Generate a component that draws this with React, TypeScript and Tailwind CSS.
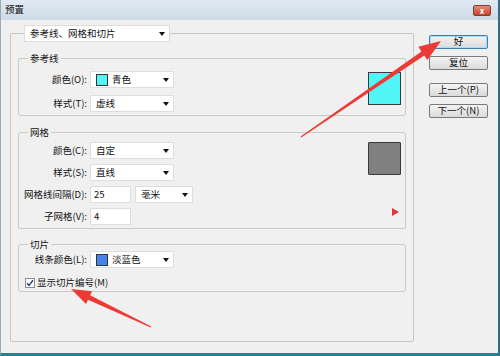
import React from "react"

const font = { fontFamily: '"Noto Sans CJK SC", "Noto Sans", sans-serif' }

function Caret() {
  return (
    <svg width="6" height="4" viewBox="0 0 6 4" className="shrink-0">
      <path d="M0 0h6L3 4z" fill="#111" />
    </svg>
  )
}

function Select({ w, children }: { w: string; children: React.ReactNode }) {
  return (
    <div className={`${w} h-[17px] bg-white border border-[#dedede] flex items-center pl-[5px] pr-[4px] shrink-0`}>
      <div className="flex-1 flex items-center gap-[4px] leading-none">{children}</div>
      <Caret />
    </div>
  )
}

function Swatch({ color }: { color: string }) {
  return <span className={`w-[12px] h-[12px] border border-[#333] ${color}`} />
}

function Row({ label, children }: { label: string; children: React.ReactNode }) {
  return (
    <div className="flex items-center h-[17px]">
      <span className="w-[69px] text-right pr-[1px] whitespace-nowrap">{label}</span>
      <div className="ml-[2px] flex items-center gap-[4px]">{children}</div>
    </div>
  )
}

function Group({ title, className, children }: { title: string; className: string; children: React.ReactNode }) {
  return (
    <fieldset className={`border border-[#cacaca] rounded-[2px] mx-[7px] ${className}`}>
      <legend className="ml-[9px] px-[2px] leading-[12px]">{title}</legend>
      {children}
    </fieldset>
  )
}

function Btn({ children, primary }: { children: React.ReactNode; primary?: boolean }) {
  return (
    <div
      className={`h-[14px] w-[59px] rounded-[2px] border flex items-center justify-center leading-none bg-gradient-to-b from-[#f4f4f4] to-[#dadada] ${
        primary ? "border-[#3c7fb1] shadow-[inset_0_0_0_1px_#a8dcf7]" : "border-[#7a7a7a]"
      }`}
    >
      {children}
    </div>
  )
}

export default function App() {
  return (
    <div
      className="w-[500px] h-[356px] relative overflow-hidden bg-[#f0f0f0] border-l border-l-[#98abbd] border-r-2 border-r-[#2f6d86] border-b-[3px] border-b-[#2e7f8d] text-[9.5px] text-[#111] flex flex-col"
      style={font}
    >
      {/* title bar */}
      <div className="h-[20px] shrink-0 flex items-start justify-between pl-[4px] pr-[7px] bg-gradient-to-b from-[#e1eaf3] to-[#cddae7]">
        <span className="mt-[5px] leading-none">预置</span>
        <div className="mt-[5px] w-[18px] h-[11px] rounded-[2px] border border-[#8a3a2c] bg-gradient-to-b from-[#e58a78] to-[#c2432c] flex items-center justify-center text-white text-[8px] font-bold leading-none">
          x
        </div>
      </div>

      <div className="flex flex-1">
        {/* main options */}
        <fieldset className="ml-[9px] mt-[5px] w-[404px] h-[317px] border border-[#c6c6c6] rounded-[2px]">
          <legend className="ml-[13px]">
            <Select w="w-[146px]">
              <span>参考线、网格和切片</span>
            </Select>
          </legend>

          <Group title="参考线" className="mt-[10px] pt-[7px] pb-[3px] pr-[4px]">
            <div className="flex justify-between">
              <div className="flex flex-col gap-[7px]">
                <Row label="颜色(O):">
                  <Select w="w-[84px]">
                    <Swatch color="bg-[#52f4f4]" />
                    <span>青色</span>
                  </Select>
                </Row>
                <Row label="样式(T):">
                  <Select w="w-[84px]">
                    <span>虚线</span>
                  </Select>
                </Row>
              </div>
              <div className="w-[33px] h-[33px] mt-[1px] border border-[#3a3a3a] bg-[#52f6f6]" />
            </div>
          </Group>

          <Group title="网格" className="mt-[10px] pt-[4px] pb-[3px] pr-[4px]">
            <div className="flex justify-between">
              <div className="flex flex-col gap-[5px]">
                <Row label="颜色(C):">
                  <Select w="w-[84px]">
                    <span>自定</span>
                  </Select>
                </Row>
                <Row label="样式(S):">
                  <Select w="w-[84px]">
                    <span>直线</span>
                  </Select>
                </Row>
                <Row label="网格线间隔(D):">
                  <div className="w-[41px] h-[17px] bg-white border border-[#dedede] pl-[3px] flex items-center">25</div>
                  <Select w="w-[58px]">
                    <span>毫米</span>
                  </Select>
                </Row>
                <Row label="子网格(V):">
                  <div className="w-[41px] h-[17px] bg-white border border-[#dedede] pl-[3px] flex items-center">4</div>
                </Row>
              </div>
              <div className="flex flex-col items-end justify-between">
                <div className="w-[33px] h-[33px] border border-[#3a3a3a] bg-[#808080] rounded-[1px]" />
                <svg width="7" height="8" viewBox="0 0 7 8" className="mb-[9px] mr-[2px]">
                  <path d="M0 0L7 4L0 8z" fill="#e8323a" />
                </svg>
              </div>
            </div>
          </Group>

          <Group title="切片" className="mt-[9px] pt-[1px] pb-[2px]">
            <Row label="线条颜色(L):">
              <Select w="w-[84px]">
                <Swatch color="bg-[#4683ea]" />
                <span>淡蓝色</span>
              </Select>
            </Row>
            <div className="flex items-center mt-[9px] ml-[6px] h-[12px]">
              <span className="w-[10px] h-[10px] bg-white border border-[#8f8f8f] flex items-center justify-center">
                <svg width="8" height="8" viewBox="0 0 8 8">
                  <path d="M1 4.2L3 6.4L7 1.2" stroke="#1d3f7a" strokeWidth="1.4" fill="none" />
                </svg>
              </span>
              <span className="ml-[2px] leading-none">显示切片编号(M)</span>
            </div>
          </Group>
        </fieldset>

        {/* buttons */}
        <div className="ml-[15px] mt-[15px] flex flex-col">
          <Btn primary>好</Btn>
          <div className="mt-[7px]">
            <Btn>复位</Btn>
          </div>
          <div className="mt-[13px]">
            <Btn>上一个(P)</Btn>
          </div>
          <div className="mt-[7px]">
            <Btn>下一个(N)</Btn>
          </div>
        </div>
      </div>

      {/* annotation arrows */}
      <svg className="absolute left-0 top-0 pointer-events-none" width="500" height="356">
        <polygon
          points="299.66,136.51 420.45,51.38 417.34,46.84 440,41 426.38,60.04 423.27,55.5 300.34,137.49"
          fill="#ec3b36"
        />
        <polygon
          points="150.26,326.46 89.13,295.32 91.06,291.26 70,289 85.06,303.9 86.99,299.84 149.74,327.54"
          fill="#ec3b36"
        />
      </svg>
    </div>
  )
}
